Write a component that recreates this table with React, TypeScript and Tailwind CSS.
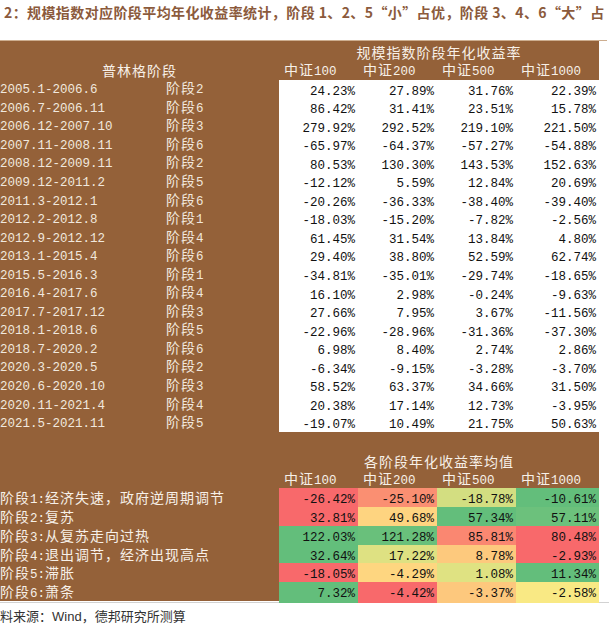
import React from "react";

const CJK_RE = /([\u3000-\u303f\u4e00-\u9fff\uff00-\uffef\u201c\u201d]+)/;
const CJK_TEST = /[\u3000-\u303f\u4e00-\u9fff\uff00-\uffef\u201c\u201d]/;

function T({ s }: { s: string }) {
  const parts = s.split(CJK_RE);
  return (
    <span className="whitespace-nowrap">
      {parts.map((p, i) =>
        p === "" ? null : CJK_TEST.test(p) ? (
          <span key={i} className="font-['Noto_Sans_CJK_SC',sans-serif] text-[14px] tracking-[1px]">
            {p}
          </span>
        ) : (
          <span key={i} className="font-['Liberation_Mono',monospace] text-[12.5px]">
            {p}
          </span>
        )
      )}
    </span>
  );
}

const upper: string[][] = [
  ["2005.1-2006.6", "阶段2", "24.23%", "27.89%", "31.76%", "22.39%"],
  ["2006.7-2006.11", "阶段6", "86.42%", "31.41%", "23.51%", "15.78%"],
  ["2006.12-2007.10", "阶段3", "279.92%", "292.52%", "219.10%", "221.50%"],
  ["2007.11-2008.11", "阶段6", "-65.97%", "-64.37%", "-57.27%", "-54.88%"],
  ["2008.12-2009.11", "阶段2", "80.53%", "130.30%", "143.53%", "152.63%"],
  ["2009.12-2011.2", "阶段5", "-12.12%", "5.59%", "12.84%", "20.69%"],
  ["2011.3-2012.1", "阶段6", "-20.26%", "-36.33%", "-38.40%", "-39.40%"],
  ["2012.2-2012.8", "阶段1", "-18.03%", "-15.20%", "-7.82%", "-2.56%"],
  ["2012.9-2012.12", "阶段4", "61.45%", "31.54%", "13.84%", "4.80%"],
  ["2013.1-2015.4", "阶段6", "29.40%", "38.80%", "52.59%", "62.74%"],
  ["2015.5-2016.3", "阶段1", "-34.81%", "-35.01%", "-29.74%", "-18.65%"],
  ["2016.4-2017.6", "阶段4", "16.10%", "2.98%", "-0.24%", "-9.63%"],
  ["2017.7-2017.12", "阶段3", "27.66%", "7.95%", "3.67%", "-11.56%"],
  ["2018.1-2018.6", "阶段5", "-22.96%", "-28.96%", "-31.36%", "-37.30%"],
  ["2018.7-2020.2", "阶段6", "6.98%", "8.40%", "2.74%", "2.86%"],
  ["2020.3-2020.5", "阶段2", "-6.34%", "-9.15%", "-3.28%", "-3.70%"],
  ["2020.6-2020.10", "阶段3", "58.52%", "63.37%", "34.66%", "31.50%"],
  ["2020.11-2021.4", "阶段4", "20.38%", "17.14%", "12.73%", "-3.95%"],
  ["2021.5-2021.11", "阶段5", "-19.07%", "10.49%", "21.75%", "50.63%"],
];

type Cell = [string, string];
const lower: { label: string; cells: Cell[] }[] = [
  {
    label: "阶段1:经济失速，政府逆周期调节",
    cells: [
      ["-26.42%", "bg-[#f8696b]"],
      ["-25.10%", "bg-[#fa8f72]"],
      ["-18.78%", "bg-[#d3de81]"],
      ["-10.61%", "bg-[#63be7b]"],
    ],
  },
  {
    label: "阶段2:复苏",
    cells: [
      ["32.81%", "bg-[#f8696b]"],
      ["49.68%", "bg-[#fed480]"],
      ["57.34%", "bg-[#63be7b]"],
      ["57.11%", "bg-[#6cc17c]"],
    ],
  },
  {
    label: "阶段3:从复苏走向过热",
    cells: [
      ["122.03%", "bg-[#63be7b]"],
      ["121.28%", "bg-[#69c07b]"],
      ["85.81%", "bg-[#fa8771]"],
      ["80.48%", "bg-[#f8696b]"],
    ],
  },
  {
    label: "阶段4:退出调节，经济出现高点",
    cells: [
      ["32.64%", "bg-[#63be7b]"],
      ["17.22%", "bg-[#dee182]"],
      ["8.78%", "bg-[#fdc97d]"],
      ["-2.93%", "bg-[#f8696b]"],
    ],
  },
  {
    label: "阶段5:滞胀",
    cells: [
      ["-18.05%", "bg-[#f8696b]"],
      ["-4.29%", "bg-[#fed680]"],
      ["1.08%", "bg-[#dfe282]"],
      ["11.34%", "bg-[#63be7b]"],
    ],
  },
  {
    label: "阶段6:萧条",
    cells: [
      ["7.32%", "bg-[#63be7b]"],
      ["-4.42%", "bg-[#f8696b]"],
      ["-3.37%", "bg-[#fdc87d]"],
      ["-2.58%", "bg-[#f9e984]"],
    ],
  },
];

const heads = ["中证100", "中证200", "中证500", "中证1000"];
const cols = "grid grid-cols-[79px_79px_79px_83px]";

export default function App() {
  return (
    <div className="w-[609px] h-[636px] bg-white overflow-hidden">
      <div className="h-[40px] pt-[3px] pl-[4px] whitespace-nowrap text-[14px] tracking-[0.4px] leading-[18px] font-bold text-[#8b5a3c] font-['Noto_Sans_CJK_SC',sans-serif]">
        2：规模指数对应阶段平均年化收益率统计，阶段 1、2、5“小”占优，阶段 3、4、6“大”占
      </div>
      <div className="w-[607px] h-px bg-[#cdae90]" />
      <div className="w-[599px] bg-[#946139] text-[#f7f0e8]">
        {/* upper header */}
        <div className="grid grid-cols-[279px_320px]">
          <div className="h-[19.5px]" />
          <div className="h-[19.5px] flex items-end justify-center leading-[18px]">
            <T s="规模指数阶段年化收益率" />
          </div>
          <div className="h-[19px] flex items-center justify-center leading-[18px]">
            <T s="普林格阶段" />
          </div>
          <div className={cols}>
            {heads.map((h) => (
              <div key={h} className="h-[19px] flex items-center pl-[5px] leading-[18px]">
                <T s={h} />
              </div>
            ))}
          </div>
        </div>
        {/* upper body */}
        <div className="grid grid-cols-[279px_320px]">
          <div className="flex flex-col text-[#f1e8de]">
            {upper.map((r) => (
              <div key={r[0]} className="h-[18.55px] flex items-center leading-[18px]">
                <div className="w-[166px]">
                  <T s={r[0]} />
                </div>
                <div>
                  <T s={r[1]} />
                </div>
              </div>
            ))}
          </div>
          <div className="bg-white text-[#111111] flex flex-col">
            {upper.map((r) => (
              <div key={r[0]} className={`${cols} h-[18.55px]`}>
                {r.slice(2).map((v, i) => (
                  <div key={i} className="flex items-center justify-end pr-[3px] leading-[18px]">
                    <T s={v} />
                  </div>
                ))}
              </div>
            ))}
          </div>
        </div>
        {/* lower header */}
        <div className="pt-[20px] grid grid-cols-[279px_320px]">
          <div className="h-[18.5px]" />
          <div className="h-[18.5px] flex items-center justify-center leading-[18px]">
            <T s="各阶段年化收益率均值" />
          </div>
          <div className="h-[17.8px]" />
          <div className={cols}>
            {heads.map((h) => (
              <div key={h} className="h-[17.8px] flex items-center pl-[5px] leading-[18px]">
                <T s={h} />
              </div>
            ))}
          </div>
        </div>
        {/* lower body */}
        <div className="flex flex-col">
          {lower.map((row) => (
            <div key={row.label} className="grid grid-cols-[279px_320px] h-[18.8px]">
              <div className="flex items-center leading-[18px]">
                <T s={row.label} />
              </div>
              <div className={`${cols} text-[#111111]`}>
                {row.cells.map(([v, c], i) => (
                  <div key={i} className={`${c} flex items-center justify-end pr-[3px] leading-[18px]`}>
                    <T s={v} />
                  </div>
                ))}
              </div>
            </div>
          ))}
        </div>
      </div>
      <div className="h-px mt-px bg-[#d2d2d2]" />
      <div className="pt-[3px] leading-[20px] text-[#333333] whitespace-nowrap text-[13px] font-['Noto_Sans_CJK_SC',sans-serif]">
        料来源：<span className="font-['Liberation_Sans',sans-serif]">Wind</span>，德邦研究所测算
      </div>
    </div>
  );
}
